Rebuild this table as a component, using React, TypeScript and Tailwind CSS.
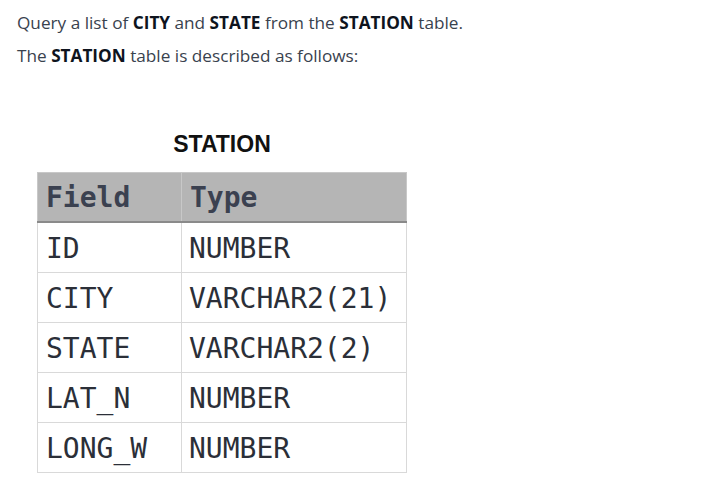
const rows = [
  { field: "ID", type: "NUMBER" },
  { field: "CITY", type: "VARCHAR2(21)" },
  { field: "STATE", type: "VARCHAR2(2)" },
  { field: "LAT_N", type: "NUMBER" },
  { field: "LONG_W", type: "NUMBER" },
];

export default function App() {
  return (
    <div className="min-h-screen bg-white px-[17px] pt-[11px] font-['Open_Sans',sans-serif] text-[17.2px] leading-[24px] text-[#39424e]">
      <p className="mb-[9px]">
        Query a list of <b className="font-bold text-[#0e141e]">CITY</b> and{" "}
        <b className="font-bold text-[#0e141e]">STATE</b> from the{" "}
        <b className="font-bold text-[#0e141e]">STATION</b> table.
      </p>
      <p>
        The <b className="font-bold text-[#0e141e]">STATION</b> table is described as follows:
      </p>

      {/* table picture */}
      <div className="mt-[62px] ml-[20px] w-[370px]">
        <div className="mb-[14px] text-center font-['Liberation_Sans',Arial,sans-serif] text-[23px] leading-[28px] font-bold text-[#111]">
          STATION
        </div>
        <table className="w-[370px] border-collapse font-['DejaVu_Sans_Mono',monospace] text-[28px] leading-[47px]">
          <thead>
            <tr className="bg-[#b5b5b5] text-[#3b4150]">
              <th className="w-[144px] border border-[#c8c8c8] border-b-2 border-b-[#8a8a8a] pl-2 pt-[1px] text-left font-bold leading-[47px]">
                Field
              </th>
              <th className="border border-[#c8c8c8] border-b-2 border-b-[#8a8a8a] pl-2 pt-[1px] text-left font-bold leading-[47px]">
                Type
              </th>
            </tr>
          </thead>
          <tbody className="text-[#2b2f38]">
            {rows.map((r) => (
              <tr key={r.field}>
                <td className="border border-[#d9d9d9] pl-2 pt-[2px]">{r.field}</td>
                <td className="border border-[#d9d9d9] pl-[7px] pt-[2px]">{r.type}</td>
              </tr>
            ))}
          </tbody>
        </table>
      </div>
    </div>
  );
}
